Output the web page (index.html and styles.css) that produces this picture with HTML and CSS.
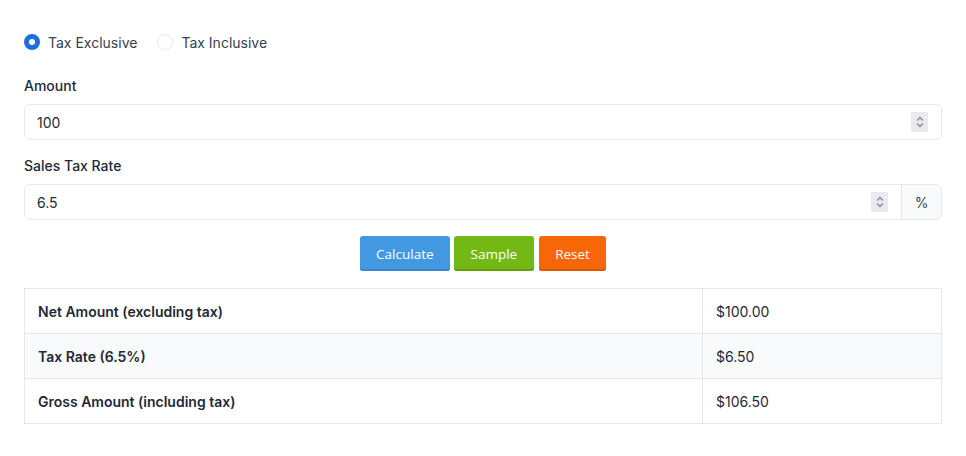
FILE: index.html
```html
<!DOCTYPE html>
<html lang="en">
<head>
  <meta charset="UTF-8" />
  <title>Sales Tax Calculator</title>
  <meta name="viewport" content="width=device-width, initial-scale=1.0" />
  <link rel="stylesheet" href="styles.css">
</head>
<body>
  <div class="card">
    <div class="mode">
      <label class="radio"><span class="dot on"></span>Tax Exclusive</label>
      <label class="radio"><span class="dot"></span>Tax Inclusive</label>
    </div>

    <div class="field">
      <div class="label">Amount</div>
      <div class="input-group">
        <div class="input">
          <span class="value">100</span>
          <span class="spin">
            <svg width="10" height="14" viewBox="0 0 10 14"><path d="M2 5.5 5 2.5 8 5.5M2 8.5 5 11.5 8 8.5" fill="none" stroke="#8a8a94" stroke-width="1.3"/></svg>
          </span>
        </div>
      </div>
    </div>

    <div class="field">
      <div class="label">Sales Tax Rate</div>
      <div class="input-group">
        <div class="input">
          <span class="value">6.5</span>
          <span class="spin">
            <svg width="10" height="14" viewBox="0 0 10 14"><path d="M2 5.5 5 2.5 8 5.5M2 8.5 5 11.5 8 8.5" fill="none" stroke="#8a8a94" stroke-width="1.3"/></svg>
          </span>
        </div>
        <span class="addon">%</span>
      </div>
    </div>

    <div class="actions">
      <button class="btn calc">Calculate</button>
      <button class="btn sample">Sample</button>
      <button class="btn reset">Reset</button>
    </div>

    <table class="result">
      <tr><th>Net Amount (excluding tax)</th><td>$100.00</td></tr>
      <tr><th>Tax Rate (6.5%)</th><td>$6.50</td></tr>
      <tr><th>Gross Amount (including tax)</th><td>$106.50</td></tr>
    </table>
  </div>
</body>
</html>
```

FILE: styles.css
```css
* { margin: 0; padding: 0; box-sizing: border-box; }
body {
  background: #fff;
  color: #1f2937;
  font-family: Inter, "Noto Sans", sans-serif;
  font-size: 14px;
}

.card {
  padding: 30px 24px 32px;
}

.mode {
  display: flex;
  gap: 20px;
  height: 24px;
  align-items: center;
  margin-bottom: 22px;
}

.radio {
  display: flex;
  align-items: center;
  gap: 8px;
  color: #374151;
}

.dot {
  width: 16px;
  height: 16px;
  border-radius: 50%;
  border: 1px solid #e5e7eb;
  background: #fff;
}

.dot.on {
  border: 5px solid #1e6fd9;
}

.field { margin-bottom: 16px; }

.label {
  font-weight: 500;
  color: #1f2937;
  height: 20px;
  line-height: 20px;
  margin-bottom: 8px;
}

.input-group {
  display: flex;
  border: 1px solid #e5e7eb;
  border-radius: 6px;
  height: 36px;
  overflow: hidden;
}

.input {
  flex: 1;
  display: flex;
  align-items: center;
  justify-content: space-between;
  padding: 0 13px 0 12px;
  background: #fff;
}

.spin {
  width: 17px;
  height: 20px;
  background: #e9e9ee;
  display: flex;
  align-items: center;
  justify-content: center;
}

.addon {
  width: 40px;
  border-left: 1px solid #e5e7eb;
  background: #f9fafb;
  display: flex;
  align-items: center;
  justify-content: center;
  color: #374151;
}

.actions {
  display: flex;
  justify-content: center;
  gap: 4px;
  margin-bottom: 17px;
}

.btn {
  height: 35px;
  border: none;
  border-radius: 3px;
  color: #fff;
  font-family: "Open Sans", sans-serif;
  font-size: 13.5px;
  padding: 0 16.5px;
}

.calc { background: #4299e1; box-shadow: inset 0 -2px 0 #3a86c8; }
.sample { background: #74b816; box-shadow: inset 0 -2px 0 #62a00f; }
.reset { background: #f76707; box-shadow: inset 0 -2px 0 #d95a05; margin-left: 1px; }

.result {
  width: 100%;
  border-collapse: collapse;
}

.result th, .result td {
  border: 1px solid #e5e7eb;
  height: 45px;
  text-align: left;
  padding: 0 13px;
}

.result th {
  font-weight: 600;
  width: 678px;
}

.result tr:nth-child(2) { background: #f9fafb; }
```
